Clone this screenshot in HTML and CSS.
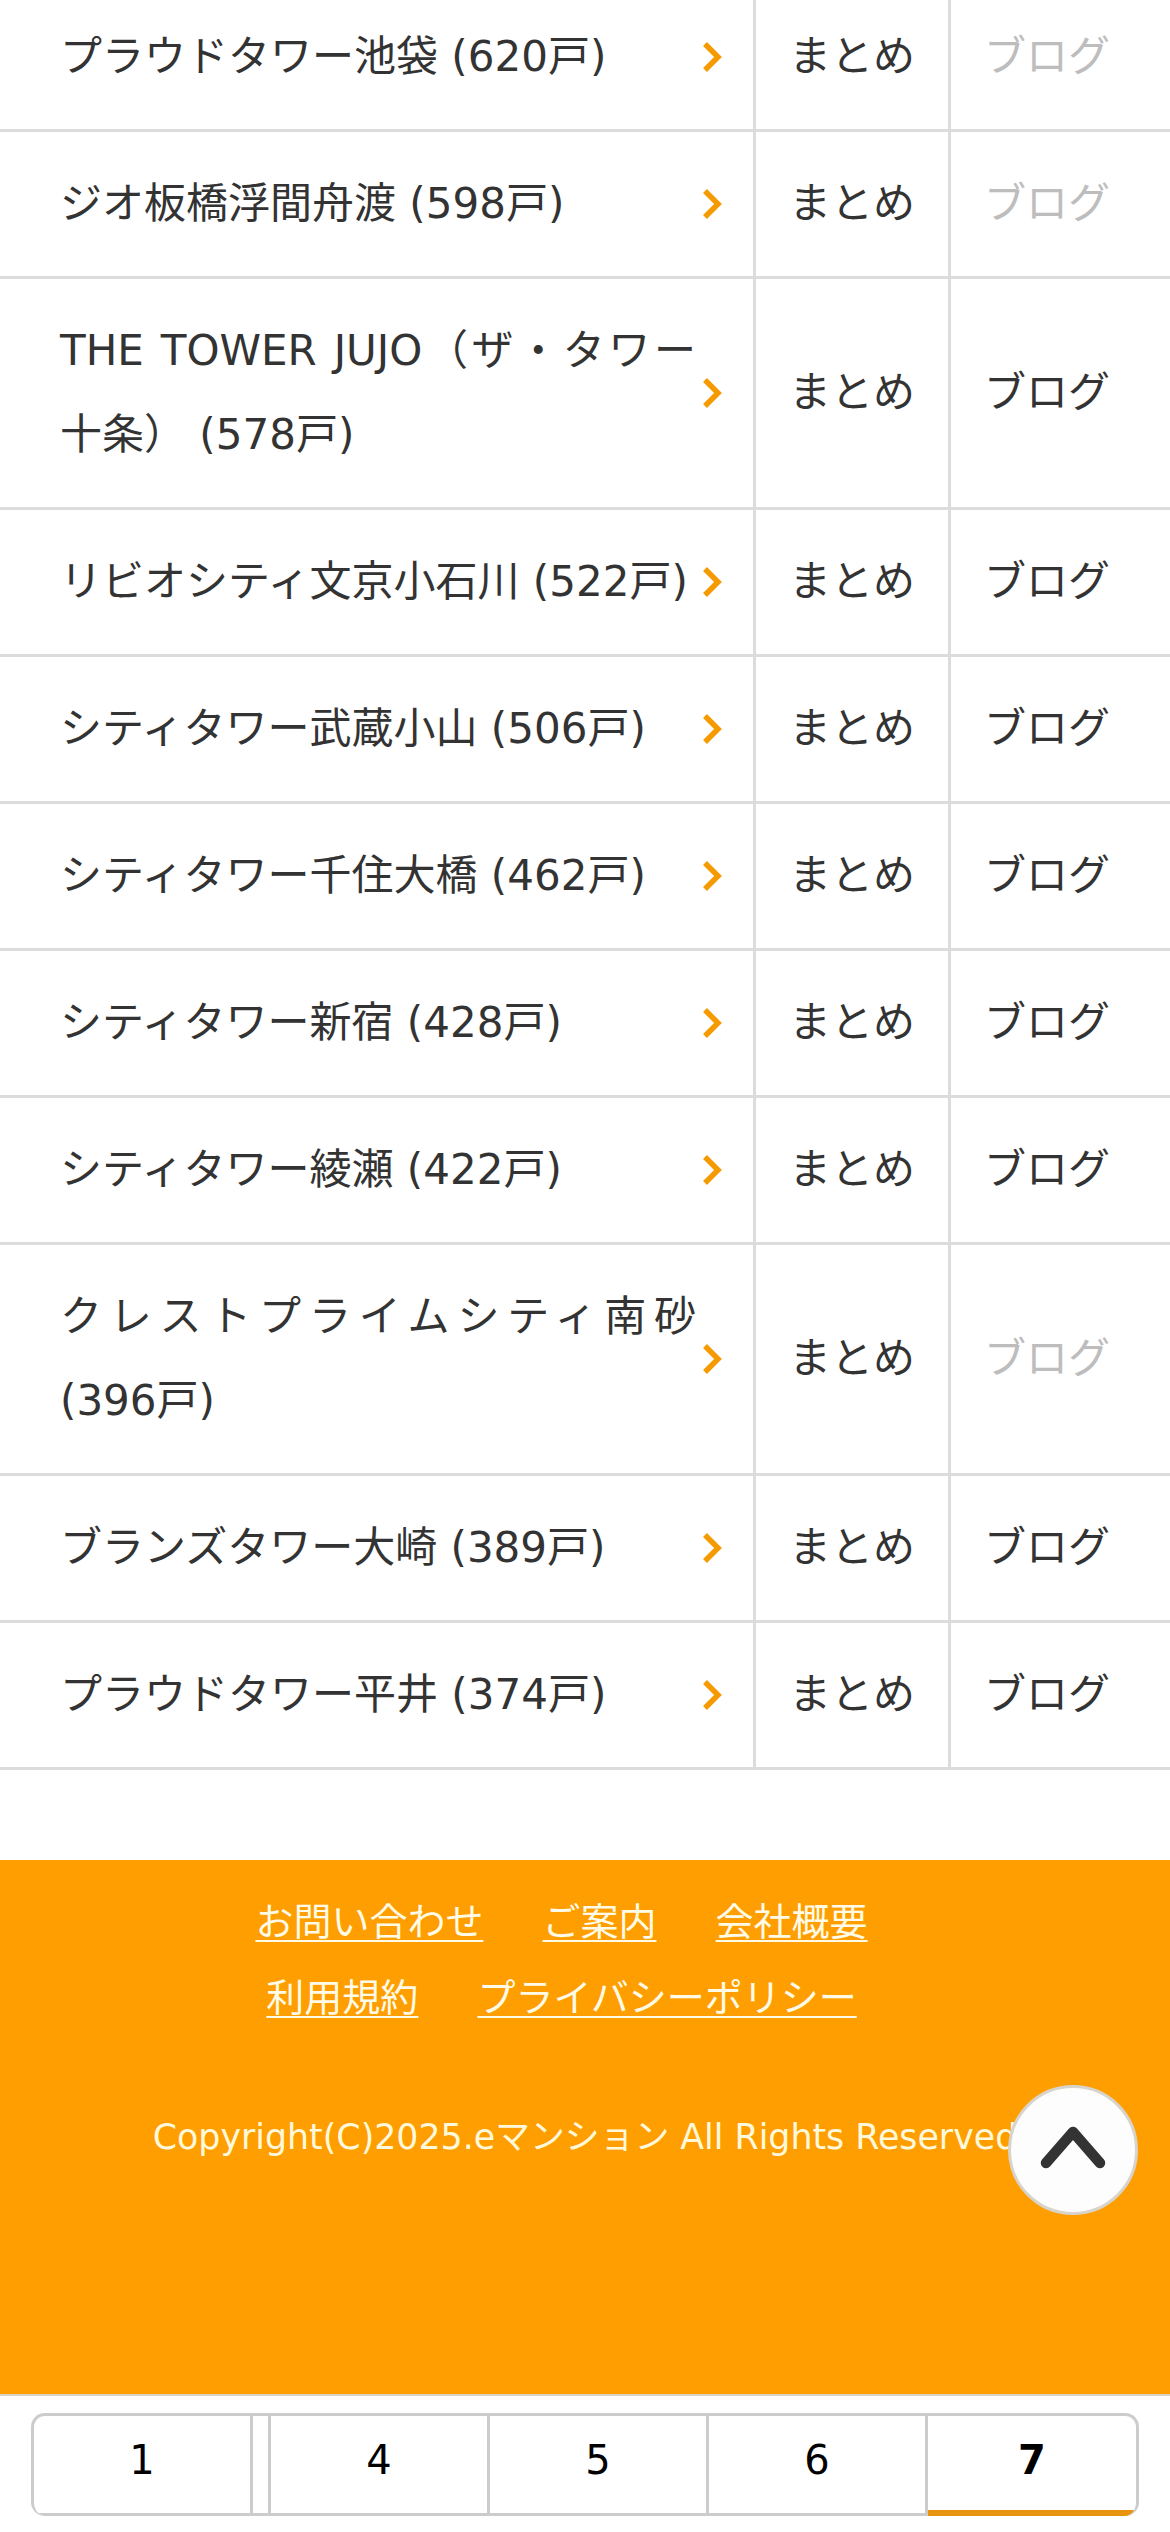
FILE: index.html
```html
<!DOCTYPE html>
<html lang="ja">
<head>
<meta charset="utf-8">
<title>タワーマンション一覧</title>
<link rel="stylesheet" href="styles.css">
</head>
<body>
<div class="list">
  <div class="row">
    <div class="name"><span class="name-text">プラウドタワー池袋 (620戸)</span><span class="chev"><svg width="20" height="32" viewBox="0 0 20 32"><polyline points="3,3 16,16 3,29" fill="none" stroke="#f59a00" stroke-width="5.5"/></svg></span></div>
    <div class="cell">まとめ</div>
    <div class="cell blog off">ブログ</div>
  </div>
  <div class="row">
    <div class="name"><span class="name-text">ジオ板橋浮間舟渡 (598戸)</span><span class="chev"><svg width="20" height="32" viewBox="0 0 20 32"><polyline points="3,3 16,16 3,29" fill="none" stroke="#f59a00" stroke-width="5.5"/></svg></span></div>
    <div class="cell">まとめ</div>
    <div class="cell blog off">ブログ</div>
  </div>
  <div class="row">
    <div class="name"><span class="name-text">THE TOWER JUJO（ザ・タワー十条） (578戸)</span><span class="chev"><svg width="20" height="32" viewBox="0 0 20 32"><polyline points="3,3 16,16 3,29" fill="none" stroke="#f59a00" stroke-width="5.5"/></svg></span></div>
    <div class="cell">まとめ</div>
    <div class="cell blog">ブログ</div>
  </div>
  <div class="row">
    <div class="name"><span class="name-text">リビオシティ文京小石川 (522戸)</span><span class="chev"><svg width="20" height="32" viewBox="0 0 20 32"><polyline points="3,3 16,16 3,29" fill="none" stroke="#f59a00" stroke-width="5.5"/></svg></span></div>
    <div class="cell">まとめ</div>
    <div class="cell blog">ブログ</div>
  </div>
  <div class="row">
    <div class="name"><span class="name-text">シティタワー武蔵小山 (506戸)</span><span class="chev"><svg width="20" height="32" viewBox="0 0 20 32"><polyline points="3,3 16,16 3,29" fill="none" stroke="#f59a00" stroke-width="5.5"/></svg></span></div>
    <div class="cell">まとめ</div>
    <div class="cell blog">ブログ</div>
  </div>
  <div class="row">
    <div class="name"><span class="name-text">シティタワー千住大橋 (462戸)</span><span class="chev"><svg width="20" height="32" viewBox="0 0 20 32"><polyline points="3,3 16,16 3,29" fill="none" stroke="#f59a00" stroke-width="5.5"/></svg></span></div>
    <div class="cell">まとめ</div>
    <div class="cell blog">ブログ</div>
  </div>
  <div class="row">
    <div class="name"><span class="name-text">シティタワー新宿 (428戸)</span><span class="chev"><svg width="20" height="32" viewBox="0 0 20 32"><polyline points="3,3 16,16 3,29" fill="none" stroke="#f59a00" stroke-width="5.5"/></svg></span></div>
    <div class="cell">まとめ</div>
    <div class="cell blog">ブログ</div>
  </div>
  <div class="row">
    <div class="name"><span class="name-text">シティタワー綾瀬 (422戸)</span><span class="chev"><svg width="20" height="32" viewBox="0 0 20 32"><polyline points="3,3 16,16 3,29" fill="none" stroke="#f59a00" stroke-width="5.5"/></svg></span></div>
    <div class="cell">まとめ</div>
    <div class="cell blog">ブログ</div>
  </div>
  <div class="row">
    <div class="name"><span class="name-text">クレストプライムシティ南砂 (396戸)</span><span class="chev"><svg width="20" height="32" viewBox="0 0 20 32"><polyline points="3,3 16,16 3,29" fill="none" stroke="#f59a00" stroke-width="5.5"/></svg></span></div>
    <div class="cell">まとめ</div>
    <div class="cell blog off">ブログ</div>
  </div>
  <div class="row">
    <div class="name"><span class="name-text">ブランズタワー大崎 (389戸)</span><span class="chev"><svg width="20" height="32" viewBox="0 0 20 32"><polyline points="3,3 16,16 3,29" fill="none" stroke="#f59a00" stroke-width="5.5"/></svg></span></div>
    <div class="cell">まとめ</div>
    <div class="cell blog">ブログ</div>
  </div>
  <div class="row">
    <div class="name"><span class="name-text">プラウドタワー平井 (374戸)</span><span class="chev"><svg width="20" height="32" viewBox="0 0 20 32"><polyline points="3,3 16,16 3,29" fill="none" stroke="#f59a00" stroke-width="5.5"/></svg></span></div>
    <div class="cell">まとめ</div>
    <div class="cell blog">ブログ</div>
  </div>
</div>

<footer class="footer">
  <div class="links">
    <a href="#">お問い合わせ</a>
    <a href="#">ご案内</a>
    <a href="#">会社概要</a>
  </div>
  <div class="links">
    <a href="#">利用規約</a>
    <a href="#">プライバシーポリシー</a>
  </div>
  <p class="copyright">Copyright(C)2025.eマンション All Rights Reserved</p>
  <a class="to-top" href="#"><svg width="124" height="124" viewBox="0 0 124 124"><polyline points="35,75 62,44 89,75" fill="none" stroke="#333" stroke-width="10.5" stroke-linecap="round" stroke-linejoin="round"/></svg></a>
</footer>

<nav class="pager">
  <div class="pager-box">
    <a class="tab" href="#">1</a>
    <span class="tab gap"></span>
    <a class="tab" href="#">4</a>
    <a class="tab" href="#">5</a>
    <a class="tab" href="#">6</a>
    <a class="tab current" href="#">7</a>
  </div>
</nav>
</body>
</html>
```

FILE: styles.css
```css
* {
  box-sizing: border-box;
}

html, body {
  margin: 0;
  padding: 0;
  background: #fff;
}

body {
  font-family: "DejaVu Sans", "Noto Sans CJK JP", sans-serif;
  color: #333;
  overflow: hidden;
}

.list {
  margin-top: -15px;
}

.row {
  display: flex;
  border-bottom: 3px solid #dcdcdc;
}

.name {
  width: 756px;
  display: flex;
  align-items: center;
  border-right: 3px solid #dcdcdc;
}

.name-text {
  flex: 1;
  padding: 30px 0 30px 60px;
  font-size: 42px;
  line-height: 84px;
  text-align: justify;
}

.chev {
  width: 57px;
  display: flex;
  align-items: center;
}

.chev svg {
  display: block;
  margin-left: 6px;
}

.cell {
  width: 195px;
  display: flex;
  align-items: center;
  justify-content: center;
  font-size: 42px;
  line-height: 84px;
  border-right: 3px solid #dcdcdc;
}

.cell.blog {
  flex: 1;
  border-right: none;
  padding-right: 27px;
}

.cell.off {
  color: #bdbdbd;
}

.footer {
  position: relative;
  margin-top: 90px;
  height: 534px;
  padding-top: 24px;
  background: #ff9e00;
  text-align: center;
  color: #fff9e0;
}

.links {
  font-size: 38px;
  line-height: 76px;
}

.links a {
  color: #fffbe6;
  text-decoration: underline;
  text-decoration-thickness: 2px;
  text-underline-offset: 5px;
  margin-right: 47px;
}

.copyright {
  margin: 67px 0 0;
  font-size: 34.8px;
  line-height: 69px;
  color: #fff9dc;
}

.to-top {
  position: absolute;
  top: 225px;
  right: 32px;
  width: 130px;
  height: 130px;
  border-radius: 50%;
  background: #fdfdfd;
  border: 3px solid #d8d4cc;
}

.to-top svg {
  display: block;
}

.pager {
  background: #fff;
  border-top: 2px solid #d8d2c8;
  padding: 17px 31px 16px;
  height: 138px;
}

.pager-box {
  display: flex;
  height: 103px;
  border: 3px solid #cccccc;
  border-bottom: none;
  border-radius: 14px;
  overflow: hidden;
}

.tab {
  flex: 0 0 219px;
  display: flex;
  align-items: center;
  justify-content: center;
  font-size: 40px;
  color: #000;
  text-decoration: none;
  border-right: 3px solid #cccccc;
  border-bottom: 3px solid #cccccc;
  padding-bottom: 9px;
}

.tab.gap {
  flex: 0 0 18px;
}

.tab.current {
  flex: 1;
  font-weight: bold;
  border-right: none;
  border-bottom: 6px solid #e8940e;
  padding-bottom: 6px;
}
```
